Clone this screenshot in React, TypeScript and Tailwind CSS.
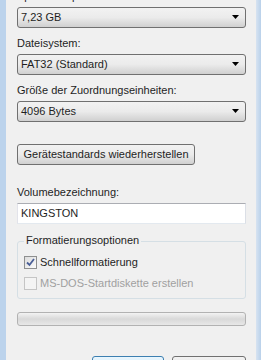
import React from "react";

const font = { fontFamily: '"Segoe UI", "Liberation Sans", Arial, sans-serif' };

function Combo({ value }: { value: string }) {
  return (
    <div className="relative h-[21px] w-full rounded-[3px] border border-[#707070] bg-gradient-to-b from-[#f2f2f2] via-[#ebebeb] to-[#d0d0d0] flex items-center pl-[3px]">
      <span className="text-[11px] leading-[15px] text-[#1e1e1e] whitespace-nowrap">{value}</span>
      <svg className="absolute right-[5px] top-[7px]" width="8" height="5" viewBox="0 0 8 5">
        <path d="M0 0 H7 L3.5 4 Z" fill="#000" />
      </svg>
    </div>
  );
}

function Label({ children, className = "" }: { children: React.ReactNode; className?: string }) {
  return <div className={`text-[11px] leading-[15px] text-[#1e1e1e] whitespace-nowrap ${className}`}>{children}</div>;
}

export default function App() {
  return (
    <div className="w-[261px] h-[360px] overflow-hidden flex" style={font}>
      <div className="w-[6px] h-full bg-[#bcd3ec]" />
      <div className="flex-1 h-full bg-[#f0f0f0] flex flex-col pl-[11px] pr-[10px] [&>*]:shrink-0">
        <Label className="mt-[-11px]">Speicherkapazität:</Label>
        <div className="mt-[3px]">
          <Combo value="7,23 GB" />
        </div>
        <Label className="mt-[8px]">Dateisystem:</Label>
        <div className="mt-[3px]">
          <Combo value="FAT32 (Standard)" />
        </div>
        <Label className="mt-[8px]">Größe der Zuordnungseinheiten:</Label>
        <div className="mt-[3px]">
          <Combo value="4096 Bytes" />
        </div>
        <div className="mt-[22px] h-[21px] w-[178px] rounded-[3px] border border-[#707070] bg-gradient-to-b from-[#f2f2f2] via-[#ebebeb] to-[#d0d0d0] flex items-center justify-center">
          <span className="text-[11px] leading-[15px] text-[#1e1e1e] whitespace-nowrap">Gerätestandards wiederherstellen</span>
        </div>
        <Label className="mt-[20px]">Volumebezeichnung:</Label>
        <div className="mt-[3px] h-[21px] w-full border border-[#abadb3] border-l-[#e2e3ea] border-r-[#dbdfe6] border-b-[#e3e9ef] bg-white flex items-center pl-[3px]">
          <span className="text-[11px] leading-[15px] text-[#1e1e1e]">KINGSTON</span>
        </div>
        <div className="relative mt-[17px] h-[58px] w-full rounded-[3px] border border-[#d5dfe5]">
          <span className="absolute left-[6px] top-[-9px] bg-[#f0f0f0] px-[2px] text-[11px] leading-[15px] text-[#1e1e1e] whitespace-nowrap">
            Formatierungsoptionen
          </span>
          <div className="absolute left-[6px] top-[13px] flex items-center gap-[3px]">
            <div className="w-[13px] h-[13px] border border-[#8e8f8f] bg-gradient-to-br from-[#dcdcdc] to-[#fbfbfb] flex items-center justify-center">
              <svg width="9" height="9" viewBox="0 0 9 9">
                <path d="M1 4.5 L3.5 7 L8 1" stroke="#4a5f97" strokeWidth="1.8" fill="none" />
              </svg>
            </div>
            <span className="text-[11px] leading-[15px] text-[#1e1e1e] whitespace-nowrap">Schnellformatierung</span>
          </div>
          <div className="absolute left-[6px] top-[34px] flex items-center gap-[3px]">
            <div className="w-[13px] h-[13px] border border-[#c5c5c5] bg-[#f4f4f4]" />
            <span className="text-[11px] leading-[15px] text-[#a0a0a0] whitespace-nowrap">MS-DOS-Startdiskette erstellen</span>
          </div>
        </div>
        <div className="mt-[13px] h-[14px] w-full rounded-[3px] border border-[#b2b2b2] bg-gradient-to-b from-[#f3f3f3] via-[#d9d9d9] to-[#e8e8e8]" />
        <div className="mt-[30px] flex">
          <div className="ml-[75px] h-[22px] w-[72px] rounded-[3px] border border-[#3c7fb1] bg-gradient-to-b from-[#eaf6fd] to-[#bee6fd]" />
          <div className="ml-[8px] h-[22px] w-[74px] rounded-[3px] border border-[#707070] bg-gradient-to-b from-[#f2f2f2] to-[#dddddd]" />
        </div>
      </div>
      <div className="w-[5px] h-full bg-gradient-to-r from-[#d7e3f1] to-[#b9d1ea]" />
    </div>
  );
}
